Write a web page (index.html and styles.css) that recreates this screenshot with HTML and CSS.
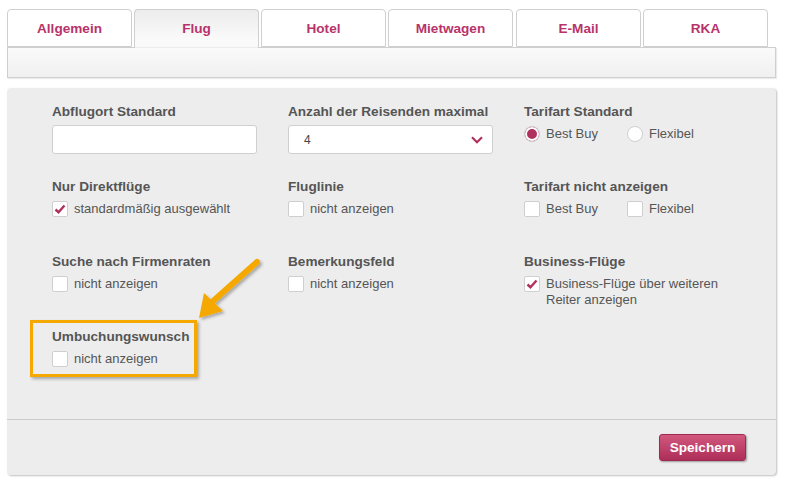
FILE: index.html
```html
<!DOCTYPE html>
<html lang="de">
<head>
<meta charset="utf-8">
<link rel="stylesheet" href="styles.css">
</head>
<body>
<div class="page">
  <div class="tabs">
    <div class="tab">Allgemein</div>
    <div class="tab active">Flug</div>
    <div class="tab">Hotel</div>
    <div class="tab">Mietwagen</div>
    <div class="tab">E-Mail</div>
    <div class="tab">RKA</div>
  </div>
  <div class="subbar"></div>

  <div class="panel">
    <div class="form">
      <div class="cell">
        <div class="label">Abflugort Standard</div>
        <div class="input"></div>
      </div>
      <div class="cell">
        <div class="label">Anzahl der Reisenden maximal</div>
        <div class="input select"><span>4</span>
          <svg class="chev" width="12" height="8" viewBox="0 0 12 8"><path d="M1 1.2 L6 6.2 L11 1.2" fill="none" stroke="#b0305e" stroke-width="2.2"/></svg>
        </div>
      </div>
      <div class="cell">
        <div class="label">Tarifart Standard</div>
        <div class="opts">
          <span class="opt"><span class="radio on"></span>Best Buy</span>
          <span class="opt"><span class="radio"></span>Flexibel</span>
        </div>
      </div>

      <div class="cell">
        <div class="label">Nur Direktflüge</div>
        <div class="opts"><span class="opt"><span class="cb"><svg width="12" height="10" viewBox="0 0 12 10"><path d="M1.5 5.5 L4.5 8.2 L10.5 1.5" fill="none" stroke="#b0305e" stroke-width="2.4"/></svg></span>standardmäßig ausgewählt</span></div>
      </div>
      <div class="cell">
        <div class="label">Fluglinie</div>
        <div class="opts"><span class="opt"><span class="cb"></span>nicht anzeigen</span></div>
      </div>
      <div class="cell">
        <div class="label">Tarifart nicht anzeigen</div>
        <div class="opts">
          <span class="opt"><span class="cb"></span>Best Buy</span>
          <span class="opt"><span class="cb"></span>Flexibel</span>
        </div>
      </div>

      <div class="cell">
        <div class="label">Suche nach Firmenraten</div>
        <div class="opts"><span class="opt"><span class="cb"></span>nicht anzeigen</span></div>
      </div>
      <div class="cell">
        <div class="label">Bemerkungsfeld</div>
        <div class="opts"><span class="opt"><span class="cb"></span>nicht anzeigen</span></div>
      </div>
      <div class="cell">
        <div class="label">Business-Flüge</div>
        <div class="opts"><span class="opt wrap"><span class="cb"><svg width="12" height="10" viewBox="0 0 12 10"><path d="M1.5 5.5 L4.5 8.2 L10.5 1.5" fill="none" stroke="#b0305e" stroke-width="2.4"/></svg></span><span>Business-Flüge über weiteren<br>Reiter anzeigen</span></span></div>
      </div>

      <div class="cell">
        <div class="label">Umbuchungswunsch</div>
        <div class="opts"><span class="opt"><span class="cb"></span>nicht anzeigen</span></div>
      </div>
    </div>
    <div class="footer">
      <button class="save">Speichern</button>
    </div>
  </div>

  <div class="highlight"></div>
  <svg class="arrow" width="80" height="70" viewBox="0 0 80 70">
    <defs>
      <filter id="sh" x="-20%" y="-20%" width="150%" height="150%">
        <feDropShadow dx="2" dy="2" stdDeviation="1.5" flood-color="#000" flood-opacity="0.3"/>
      </filter>
    </defs>
    <g filter="url(#sh)">
      <path d="M67 7 L22 47" stroke="#f5a800" stroke-width="6" stroke-linecap="round"/>
      <path d="M9 63 L14 38 L33 56 Z" fill="#f5a800"/>
    </g>
  </svg>
</div>
</body>
</html>
```

FILE: styles.css
```css
* { box-sizing: border-box; }
html, body { margin: 0; padding: 0; background: #fff; }
body {
  font-family: "Liberation Sans", Arial, sans-serif;
  font-size: 13px;
  color: #555;
}
.page {
  position: relative;
  width: 785px;
  height: 484px;
  padding: 9px 0 0 7px;
}
.tabs {
  display: flex;
  gap: 2px;
  height: 38px;
  position: relative;
  z-index: 2;
}
.tab {
  width: 125px;
  height: 38px;
  border: 1px solid #cfcfcf;
  border-radius: 4px 4px 0 0;
  background: #fff;
  color: #b8336a;
  font-weight: bold;
  font-size: 13.6px;
  display: flex;
  align-items: center;
  justify-content: center;
  padding-top: 1px;
}
.tab:nth-child(5) { margin-left: 1px; }
.tab.active {
  background: linear-gradient(#ececec, #fafafa 80%, #fafafa);
  border-bottom-color: transparent;
  height: 39px;
  padding-bottom: 1px;
}
.subbar {
  width: 769px;
  height: 31px;
  border: 1px solid #cfcfcf;
  background: linear-gradient(#fafafa, #f0f0f0);
  box-shadow: 1px 1px 1px rgba(0,0,0,0.08);
}
.panel {
  margin-top: 10px;
  width: 769px;
  height: 387px;
  background: #ededed;
  border-radius: 4px;
  box-shadow: 1px 1px 2px rgba(0,0,0,0.25);
  display: flex;
  flex-direction: column;
}
.form {
  height: 332px;
  border-bottom: 1px solid #cbcbcb;
  padding: 16px 0 0 45px;
  display: grid;
  grid-template-columns: 236px 236px 236px;
  grid-auto-rows: 75px;
}
.label {
  font-weight: bold;
  font-size: 13.6px;
  line-height: 16px;
  color: #555;
}
.input {
  margin-top: 5px;
  width: 205px;
  height: 29px;
  background: #fff;
  border: 1px solid #cfcfcf;
  border-radius: 3px;
}
.select {
  display: flex;
  align-items: center;
  justify-content: space-between;
  padding: 0 9px 0 15px;
  font-size: 12px;
  color: #444;
}
.chev { margin-top: 1px; }
.opts {
  margin-top: 6px;
  display: flex;
  gap: 0;
}
.opt {
  display: flex;
  align-items: center;
  font-size: 13px;
  line-height: 16px;
  color: #555;
  width: 103px;
  white-space: nowrap;
}
.opt.wrap { align-items: flex-start; width: auto; }
.cb {
  width: 16px;
  height: 16px;
  flex: none;
  background: #fff;
  border: 1px solid #cfcfcf;
  border-radius: 2px;
  margin-right: 6px;
  display: flex;
  align-items: center;
  justify-content: center;
}
.radio {
  width: 16px;
  height: 16px;
  flex: none;
  border-radius: 50%;
  background: #fff;
  border: 1px solid #cfcfcf;
  margin-right: 6px;
}
.radio.on {
  background: #b0305e;
  box-shadow: inset 0 0 0 2px #fff;
  border-color: #cfcfcf;
}
.footer {
  flex: 1;
  display: flex;
  justify-content: flex-end;
  align-items: flex-start;
  padding: 14px 30px 0 0;
}
.save {
  font-family: "Liberation Sans", Arial, sans-serif;
  width: 87px;
  height: 27px;
  border: 1px solid #9d2a50;
  border-radius: 3px;
  background: linear-gradient(#d2587e, #ad2e58);
  color: #fff;
  font-weight: bold;
  font-size: 13.6px;
  box-shadow: 1px 1px 2px rgba(0,0,0,0.35);
  padding: 0;
}
.highlight {
  position: absolute;
  left: 30px;
  top: 320px;
  width: 167px;
  height: 57px;
  border: 3px solid #f5a800;
  box-shadow: 2px 2px 3px rgba(0,0,0,0.3);
}
.arrow {
  position: absolute;
  left: 190px;
  top: 255px;
}
```
